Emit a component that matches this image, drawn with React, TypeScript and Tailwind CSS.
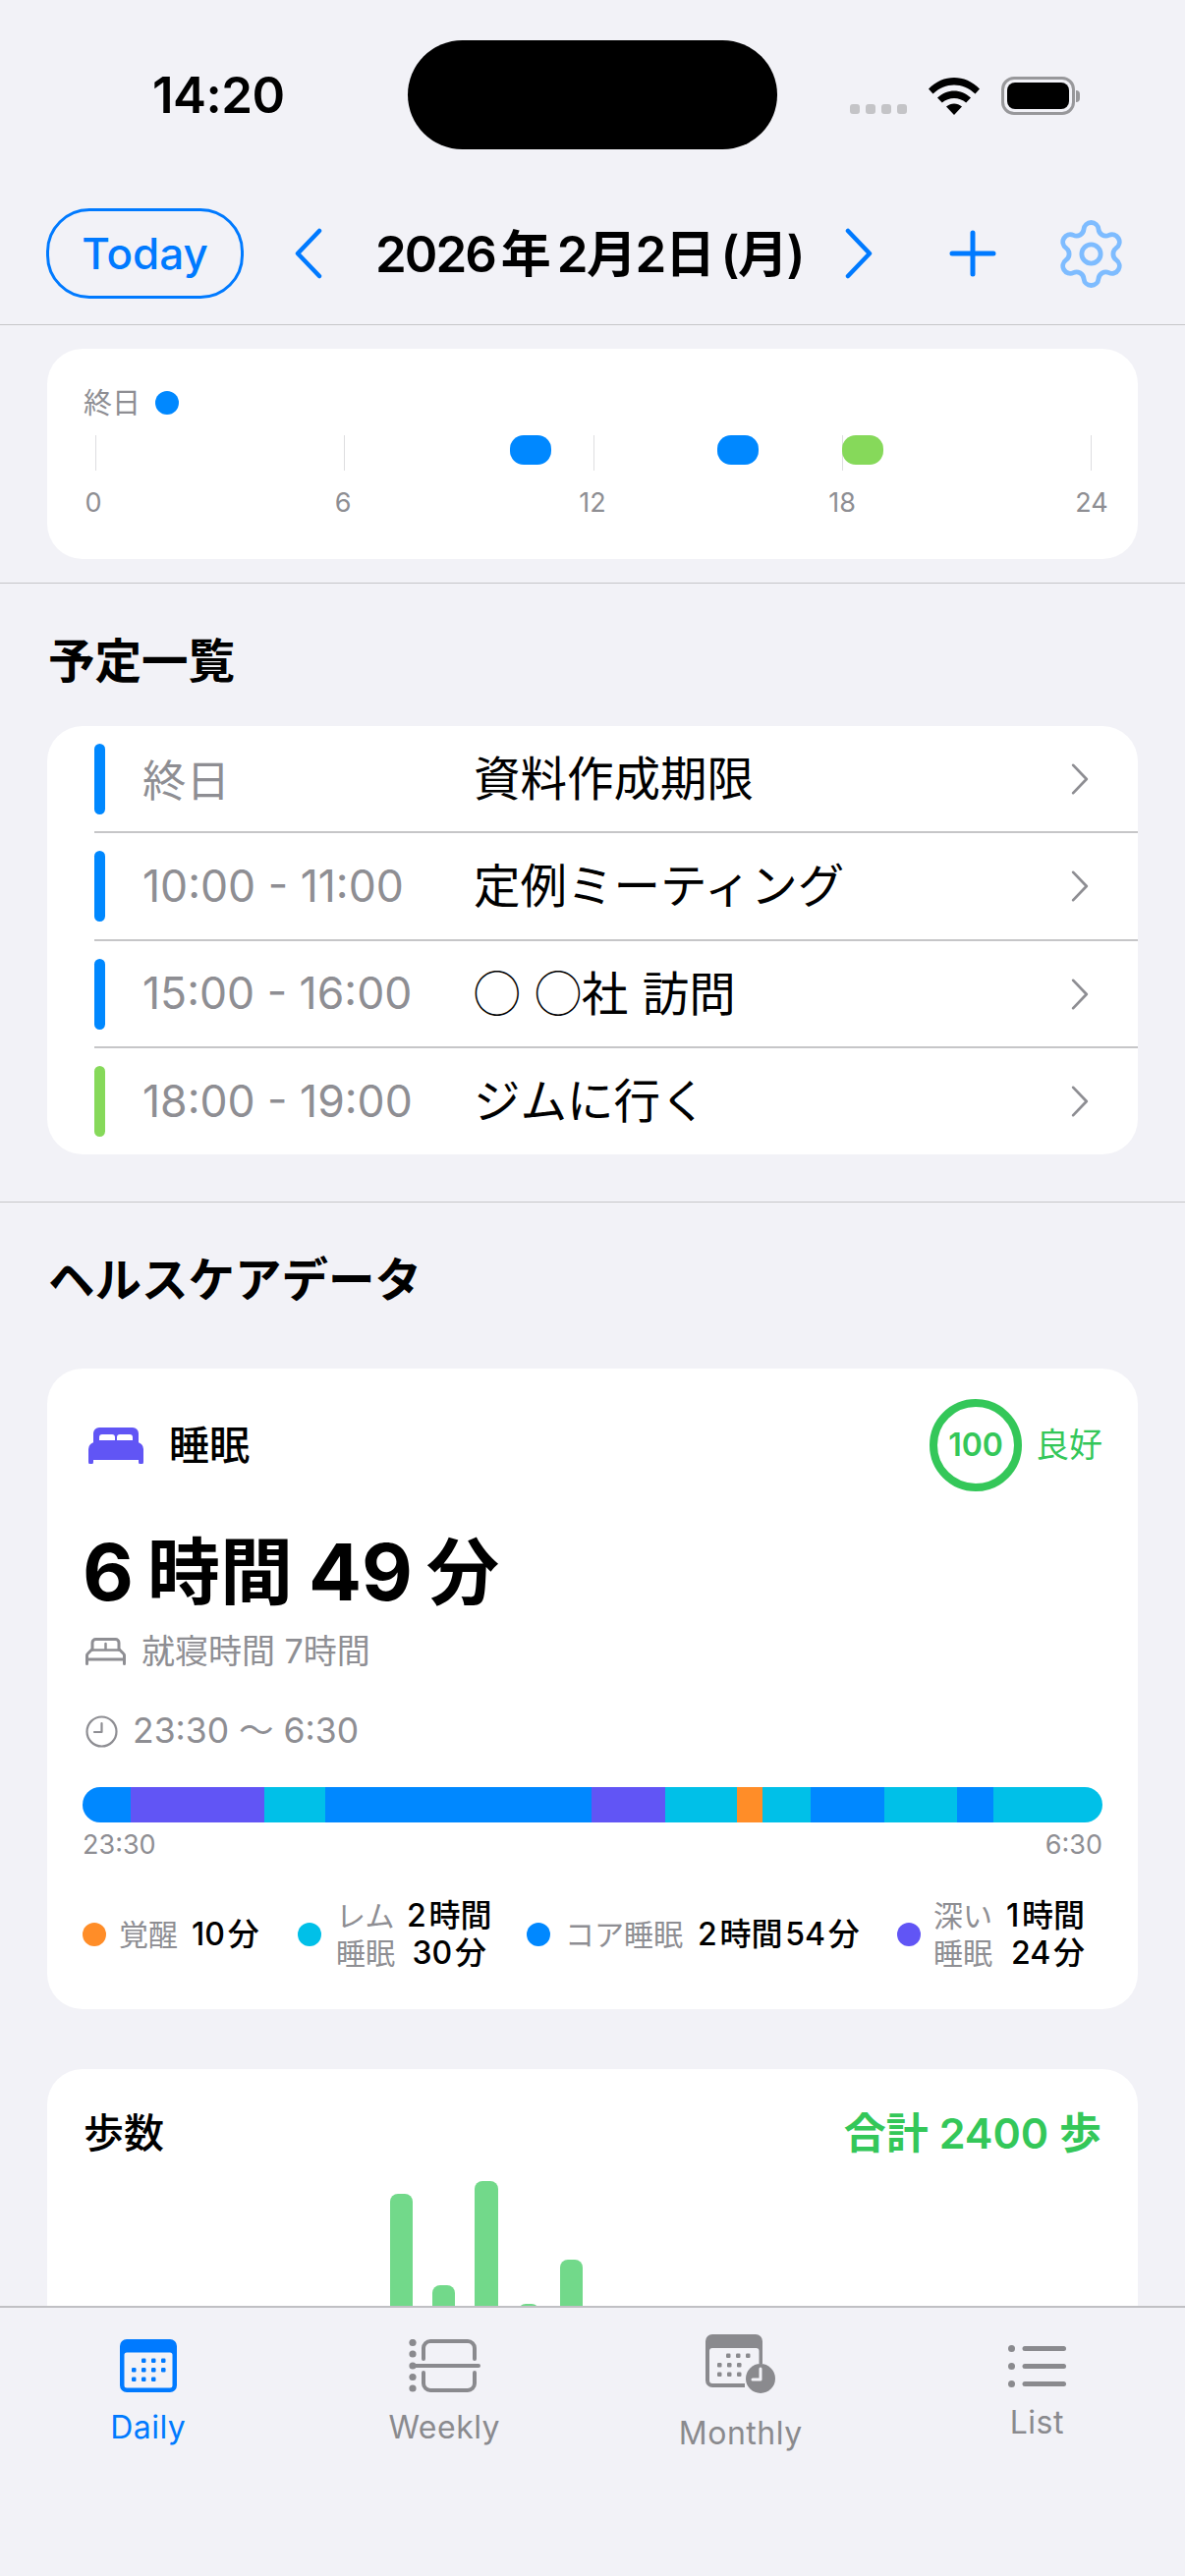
import React from 'react';
import { Settings } from 'lucide-react';

const schedule = [
  { time: '終日', title: '資料作成期限', bar: 'bg-[#0088FF]', h: 'h-[109px]', timeClass: 'pt-[5px]' },
  { time: '10:00 - 11:00', title: '定例ミーティング', bar: 'bg-[#0088FF]', h: 'h-[110px]', timeClass: '' },
  { time: '15:00 - 16:00', title: '◯ ◯社 訪問', bar: 'bg-[#0088FF]', h: 'h-[109px]', timeClass: '' },
  { time: '18:00 - 19:00', title: 'ジムに行く', bar: 'bg-[#86D95A]', h: 'h-[108px]', timeClass: '' },
];

// x extents of the sleep bar, in px
const sleepSegments = [
  { w: 'w-[49px]', c: 'bg-[#0088FF]' },
  { w: 'w-[136px]', c: 'bg-[#6155F5]' },
  { w: 'w-[62px]', c: 'bg-[#00C0E8]' },
  { w: 'w-[271px]', c: 'bg-[#0088FF]' },
  { w: 'w-[75px]', c: 'bg-[#6155F5]' },
  { w: 'w-[73px]', c: 'bg-[#00C0E8]' },
  { w: 'w-[26px]', c: 'bg-[#FF8D28]' },
  { w: 'w-[49px]', c: 'bg-[#00C0E8]' },
  { w: 'w-[75px]', c: 'bg-[#0088FF]' },
  { w: 'w-[74px]', c: 'bg-[#00C0E8]' },
  { w: 'w-[37px]', c: 'bg-[#0088FF]' },
  { w: 'w-[111px]', c: 'bg-[#00C0E8]' },
];

const Chevron = ({ dir, className }: { dir: 'left' | 'right'; className?: string }) => (
  <svg viewBox="0 0 28 52" className={className} fill="none" stroke="currentColor" strokeLinecap="round" strokeLinejoin="round">
    <path d={dir === 'left' ? 'M25 3 3 26l22 23' : 'M3 3l22 23L3 49'} strokeWidth="4.5" />
  </svg>
);

const BedFilled = () => (
  <svg viewBox="0 0 56 37" className="w-[56px] h-[37px]" fill="#6155F5">
    <path fillRule="evenodd" d="M11 0h34a6 6 0 0 1 6 6v10H5V6a6 6 0 0 1 6-6Zm3 7a3 3 0 0 0-3 3v3h16v-3a3 3 0 0 0-3-3Zm18 0a3 3 0 0 0-3 3v3h16v-3a3 3 0 0 0-3-3Z" />
    <path d="M7 15h42a7 7 0 0 1 7 7v13a2 2 0 0 1-5 0v-2H5v2a2 2 0 0 1-5 0V22a7 7 0 0 1 7-7Z" />
  </svg>
);

const BedOutline = () => (
  <svg viewBox="0 0 41 28" className="w-[41px] h-[28px]" fill="none" stroke="#8E8E93" strokeWidth="3" strokeLinecap="round">
    <path d="M7 12V5a3.500 3.500 0 0 1 3.500-3.500h20A3.500 3.500 0 0 1 34 5v7" />
    <path d="M20.500 6v6M6 12.500h29" strokeWidth="2.500" />
    <path d="M6 12.500 2.500 16a3 3 0 0 0-1 2.500v8M35 12.500l3.500 3.500a3 3 0 0 1 1 2.500v8M1.500 22h38" />
  </svg>
);

const ClockIcon = () => (
  <svg viewBox="0 0 33 33" className="w-[33px] h-[33px]" fill="none" stroke="#8E8E93" strokeWidth="2.200" strokeLinecap="round" strokeLinejoin="round">
    <circle cx="16.500" cy="16.500" r="15" />
    <path d="M16.500 8v9H9" />
  </svg>
);

const DailyIcon = () => (
  <svg viewBox="0 0 58 54" className="w-[58px] h-[54px]">
    <path fillRule="evenodd" fill="#007AFF" d="M7 0h44a7 7 0 0 1 7 7v40a7 7 0 0 1-7 7H7a7 7 0 0 1-7-7V7a7 7 0 0 1 7-7Zm0 13.500A2.500 2.500 0 0 0 4.500 16v31A2.500 2.500 0 0 0 7 49.500h44a2.500 2.500 0 0 0 2.500-2.500V16a2.500 2.500 0 0 0-2.500-2.500Z" />
    <g fill="#007AFF">
      {[22, 32, 42].map((x) => <rect key={`a${x}`} x={x} y="19.500" width="4.500" height="4.500" rx="1.200" />)}
      {[12, 22, 32, 42].map((x) => <rect key={`b${x}`} x={x} y="29" width="4.500" height="4.500" rx="1.200" />)}
      {[12, 22, 32].map((x) => <rect key={`c${x}`} x={x} y="38.500" width="4.500" height="4.500" rx="1.200" />)}
    </g>
  </svg>
);

const WeeklyIcon = () => (
  <svg viewBox="0 0 73 54" className="w-[73px] h-[54px]" fill="none" stroke="#8A8A8E" strokeWidth="4" strokeLinecap="round">
    <path d="M15 20V9a7 7 0 0 1 7-7h38a7 7 0 0 1 7 7v11M15 34v11a7 7 0 0 0 7 7h38a7 7 0 0 0 7-7V34M5 27h66" />
    <g fill="#8A8A8E" stroke="none">
      {[3.500, 15, 27, 38.500, 50].map((y) => <circle key={y} cx="4" cy={y} r="3.600" />)}
    </g>
  </svg>
);

const MonthlyIcon = () => (
  <svg viewBox="0 0 71 60" className="w-[71px] h-[60px]">
    <path fillRule="evenodd" fill="#8A8A8E" d="M7 0h44a7 7 0 0 1 7 7v23h-3.500V17a3 3 0 0 0-3-3H7a3 3 0 0 0-3 3v30a3 3 0 0 0 3 3h33v4H7a7 7 0 0 1-7-7V7a7 7 0 0 1 7-7Z" />
    <g fill="#8A8A8E">
      {[21, 31, 41].map((x) => <rect key={`a${x}`} x={x} y="19.500" width="4.500" height="4.500" rx="1.200" />)}
      {[12, 22, 32].map((x) => <rect key={`b${x}`} x={x} y="29" width="4.500" height="4.500" rx="1.200" />)}
      {[12, 22, 32].map((x) => <rect key={`c${x}`} x={x} y="38.500" width="4.500" height="4.500" rx="1.200" />)}
      <circle cx="56" cy="45" r="15" />
    </g>
    <path d="M56 35v11h-8" fill="none" stroke="#F2F2F7" strokeWidth="3" strokeLinecap="round" strokeLinejoin="round" />
  </svg>
);

const ListIcon = () => (
  <svg viewBox="0 0 59 43" className="w-[59px] h-[43px]" fill="#8A8A8E">
    {[3.500, 21.500, 39.500].map((y) => (
      <g key={y}>
        <circle cx="3.500" cy={y} r="3.500" />
        <rect x="14.500" y={y - 2.500} width="44.500" height="5" rx="2.500" />
      </g>
    ))}
  </svg>
);

const Card = ({ className, children }: { className?: string; children: React.ReactNode }) => (
  <div className={`bg-white rounded-[36px] ${className ?? ''}`}>{children}</div>
);

export default function App() {
  return (
    <div className="w-[1206px] h-[2622px] flex flex-col overflow-hidden bg-[#F2F2F7] text-black font-['Inter','Noto_Sans_CJK_JP',sans-serif]">
      {/* status bar + nav */}
      <header className="h-[331px] shrink-0 border-b border-[#C6C6C8]">
        <div className="h-[152px] pt-[41px] flex">
          <div className="w-[415px] pl-[155px] pt-[31px]">
            <span className="text-[51px] leading-[50px] font-semibold tracking-[-0.5px]">14:20</span>
          </div>
          <div className="w-[376px] h-[111px] rounded-full bg-black" />
          <div className="flex-1 flex items-start pl-[74px] pt-[38px]">
            <div className="flex gap-[6px] mt-[27px]">
              {[0, 1, 2, 3].map((i) => <span key={i} className="w-[10px] h-[10px] rounded-[3px] bg-[#C4C4C7]" />)}
            </div>
            <svg viewBox="0 0 52 38" className="w-[52px] h-[38px] ml-[22px]">
              <path d="M0 11.500C15 -3.800 37 -3.800 52 11.500l-4.500 5C34.800 4.500 17.200 4.500 4.500 16.500Z" />
              <path d="M9 20.500c10-9.500 24-9.500 34 0l-4.800 5c-7-6-17.400-6-24.400 0Z" />
              <path d="M18 29.500c5-4 11-4 16 0L26 38Z" />
            </svg>
            <div className="ml-[22px] -mt-[1px] w-[75px] h-[39px] rounded-[13px] border-[3px] border-[#98989B] p-[3px]">
              <div className="w-full h-full rounded-[8px] bg-black" />
            </div>
            <span className="w-[4px] h-[12px] mt-[13px] ml-[1px] rounded-r-full bg-[#98989B]" />
          </div>
        </div>
        <nav className="mt-[60px] h-[92px] flex items-center pl-[47px]">
          <button className="w-[201px] h-[92px] rounded-[44px] border-[3px] border-[#007AFF] text-[#007AFF] text-[44px] font-medium leading-none">Today</button>
          <Chevron dir="left" className="w-[28px] h-[52px] ml-[52px] text-[#007AFF]" />
          <span className="ml-[54px] w-[440px] flex items-center text-[51px] font-semibold leading-none whitespace-nowrap">
            <span className="tracking-[-2px]">2026</span>
            <span className="ml-[6px]">年</span>
            <span className="ml-[6px] tracking-[-1.5px]">2月2日</span>
            <span className="ml-[7px] tracking-[-1.5px]">(月)</span>
          </span>
          <Chevron dir="right" className="w-[28px] h-[52px] ml-[38px] text-[#007AFF]" />
          <svg viewBox="0 0 48 48" className="w-[48px] h-[48px] ml-[78px]" fill="none" stroke="#007AFF" strokeWidth="5" strokeLinecap="round">
            <path d="M24 3v42M3 24h42" />
          </svg>
          <Settings size={77} strokeWidth={1.5} className="ml-[58px] text-[#7EBCFF]" />
        </nav>
      </header>

      <main className="flex-1 overflow-hidden">
        <section className="px-[48px] pt-[24px] pb-[24px] border-b border-[#C6C6C8]">
          <Card className="h-[214px] px-[37px] pt-[40px]">
            <div className="flex items-center h-[30px]">
              <span className="text-[29px] leading-none text-[#8E8E93]">終日</span>
              <span className="ml-[15px] w-[24px] h-[24px] rounded-full bg-[#0088FF]" />
            </div>
            <div className="relative mt-[18px] h-[36px]">
              <div className="flex justify-between pl-[12px] pr-[10px]">
                {[0, 6, 12, 18, 24].map((h) => <span key={h} className="w-[1px] h-[36px] bg-[#DEDEE0]" />)}
              </div>
              <span className="absolute left-[434px] top-0 w-[42px] h-[30px] rounded-[14px] bg-[#0088FF]" />
              <span className="absolute left-[645px] top-0 w-[42px] h-[30px] rounded-[14px] bg-[#0088FF]" />
              <span className="absolute left-[772px] top-0 w-[42px] h-[30px] rounded-[14px] bg-[#86D95A]" />
            </div>
            <div className="mt-[18px] -mx-[2px] flex justify-between text-[27px] leading-[30px] text-[#8E8E93]">
              {[0, 6, 12, 18, 24].map((h) => <span key={h} className="w-[24px] flex justify-center">{h}</span>)}
            </div>
          </Card>
        </section>

        <section className="px-[48px] pt-[49px] pb-[48px] border-b border-[#C6C6C8]">
          <h2 className="pl-[1px] text-[47.5px] leading-[60px] font-bold mb-[36px]">予定一覧</h2>
          <Card className="overflow-hidden">
            {schedule.map((s, i) => (
              <div key={i} className={`${s.h} ml-[48px] pr-[50px] flex items-center ${i < 3 ? 'border-b-2 border-[#C6C6C8]' : ''}`}>
                <span className={`w-[11px] h-[72px] rounded-full ${s.bar}`} />
                <span className={`ml-[38px] w-[337px] text-[44.5px] leading-none text-[#8E8E93] ${s.timeClass}`}>{s.time}</span>
                <span className="flex-1 pb-[6px] text-[47.5px] leading-none [word-spacing:4px] font-['Noto_Sans_CJK_JP',sans-serif]">{s.title}</span>
                <Chevron dir="right" className="w-[18px] h-[32px] text-[#8E8E93]" />
              </div>
            ))}
          </Card>
        </section>

        <section className="px-[48px] pt-[49px]">
          <h2 className="pl-[1px] text-[47.5px] leading-[60px] font-bold mb-[60px]">ヘルスケアデータ</h2>

          <Card className="h-[652px] px-[36px] pt-[31px]">
            <div className="flex items-center justify-between h-[94px]">
              <div className="flex items-center pl-[6px]">
                <BedFilled />
                <span className="ml-[26px] text-[41px] leading-none font-medium">睡眠</span>
              </div>
              <div className="flex items-center">
                <div className="w-[94px] h-[94px] rounded-full border-[8px] border-[#34C759] flex items-center justify-center text-[#34C759] text-[32px] font-semibold leading-none">100</div>
                <span className="ml-[14px] text-[34px] leading-none text-[#34C759]">良好</span>
              </div>
            </div>
            <div className="mt-[37px] h-[90px] flex items-center font-bold text-[74px] leading-none whitespace-nowrap">
              <span className="text-[80px]">6</span>
              <span className="ml-[14px]">時間</span>
              <span className="ml-[16px] text-[80px]">49</span>
              <span className="ml-[14px]">分</span>
            </div>
            <div className="mt-[16px] pl-[3px] flex items-center h-[40px] text-[34px] leading-none text-[#8E8E93]">
              <BedOutline />
              <span className="ml-[16px]">就寝時間 7時間</span>
            </div>
            <div className="mt-[41px] pl-[3px] flex items-center h-[40px] text-[35.5px] leading-none text-[#8E8E93]">
              <ClockIcon />
              <span className="ml-[15px]">23:30 〜 6:30</span>
            </div>
            <div className="mt-[37px] flex h-[36px] rounded-full overflow-hidden">
              {sleepSegments.map((s, i) => <span key={i} className={`${s.w} ${s.c}`} />)}
            </div>
            <div className="mt-[8px] flex justify-between text-[27px] leading-[30px] text-[#8E8E93]">
              <span>23:30</span>
              <span>6:30</span>
            </div>
            <div className="mt-[38px] flex items-center text-[30px] leading-[38px]">
              <div className="w-[219px] flex items-center">
                <span className="w-[24px] h-[24px] rounded-full bg-[#FF8D28]" />
                <span className="ml-[13px] text-[#8E8E93]">覚醒</span>
                <span className="ml-[14px] text-[32px] font-medium whitespace-nowrap">10&#8202;分</span>
              </div>
              <div className="w-[233px] flex items-center">
                <span className="w-[24px] h-[24px] rounded-full bg-[#00C0E8]" />
                <div className="ml-[15px] w-[156px] grid grid-cols-[72px_84px]">
                  <span className="text-[#8E8E93]">レム</span>
                  <span className="text-[32px] font-medium text-right whitespace-nowrap">2&#8202;時間</span>
                  <span className="text-[#8E8E93]">睡眠</span>
                  <span className="text-[32px] font-medium text-right whitespace-nowrap pr-[3px]">30&#8202;分</span>
                </div>
              </div>
              <div className="w-[377px] flex items-center">
                <span className="w-[24px] h-[24px] rounded-full bg-[#0088FF]" />
                <span className="ml-[15px] text-[#8E8E93] whitespace-nowrap">コア睡眠</span>
                <span className="ml-[15px] text-[32px] font-medium whitespace-nowrap">2&#8202;時間&#8202;54&#8202;分</span>
              </div>
              <div className="flex items-center">
                <span className="w-[24px] h-[24px] rounded-full bg-[#6155F5]" />
                <div className="ml-[13px] w-[154px] grid grid-cols-[72px_82px]">
                  <span className="text-[#8E8E93]">深い</span>
                  <span className="text-[32px] font-medium text-right whitespace-nowrap">1&#8202;時間</span>
                  <span className="text-[#8E8E93]">睡眠</span>
                  <span className="text-[32px] font-medium text-right whitespace-nowrap">24&#8202;分</span>
                </div>
              </div>
            </div>
          </Card>

          <Card className="mt-[61px] h-[400px] px-[37px] pt-[40px]">
            <div className="flex items-center justify-between h-[50px]">
              <span className="text-[41px] leading-none font-medium">歩数</span>
              <span className="text-[43px] leading-none font-semibold text-[#34C759]">合計 2400 歩</span>
            </div>
            <div className="relative">
              <span className="absolute left-[312px] top-[37px] w-[23px] h-[200px] rounded-t-[8px] bg-[#72D98A]" />
              <span className="absolute left-[355px] top-[130px] w-[23px] h-[200px] rounded-t-[8px] bg-[#72D98A]" />
              <span className="absolute left-[398px] top-[24px] w-[24px] h-[200px] rounded-t-[8px] bg-[#72D98A]" />
              <span className="absolute left-[442px] top-[149px] w-[22px] h-[200px] rounded-t-[8px] bg-[#72D98A]" />
              <span className="absolute left-[485px] top-[104px] w-[23px] h-[200px] rounded-t-[8px] bg-[#72D98A]" />
            </div>
          </Card>
        </section>
      </main>

      <footer className="relative h-[275px] shrink-0 border-t-2 border-[#C0C0C4] bg-[#F2F2F7] grid grid-cols-4 text-[32px] leading-none tracking-[0.5px] text-[#8A8A8E]">
        <div className="flex flex-col items-center pt-[32px]">
          <DailyIcon />
          <span className="mt-[20px] text-[#007AFF]">Daily</span>
        </div>
        <div className="flex flex-col items-center pt-[32px]">
          <WeeklyIcon />
          <span className="mt-[20px]">Weekly</span>
        </div>
        <div className="flex flex-col items-center pt-[27px]">
          <MonthlyIcon />
          <span className="mt-[25px]">Monthly</span>
        </div>
        <div className="flex flex-col items-center pt-[38px]">
          <ListIcon />
          <span className="mt-[20px]">List</span>
        </div>
      </footer>
    </div>
  );
}
